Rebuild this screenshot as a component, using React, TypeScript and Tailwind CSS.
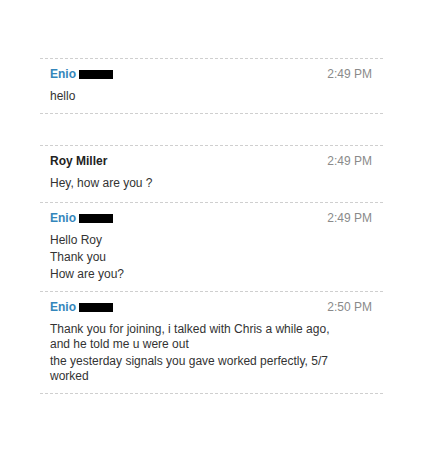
type Message = {
  id: number;
  author?: string;
  self?: boolean;
  time?: string;
  lines?: string[];
};

const messages: Message[] = [
  { id: 1, author: "Enio", self: true, time: "2:49 PM", lines: ["hello"] },
  { id: 2 },
  { id: 3, author: "Roy Miller", time: "2:49 PM", lines: ["Hey, how are you ?"] },
  {
    id: 4,
    author: "Enio",
    self: true,
    time: "2:49 PM",
    lines: ["Hello Roy", "Thank you", "How are you?"],
  },
  {
    id: 5,
    author: "Enio",
    self: true,
    time: "2:50 PM",
    lines: [
      "Thank you for joining, i talked with Chris a while ago, and he told me u were out",
      "the yesterday signals you gave worked perfectly, 5/7 worked",
    ],
  },
];

const ChatRow = ({ msg }: { msg: Message }) => {
  // ligne vide entre deux conversations
  if (!msg.author) {
    return <div className="h-[32px] border-t border-dashed border-[#cfcfcf]" />;
  }

  return (
    <div
      className={`border-t border-dashed border-[#cfcfcf] pt-2 px-[10px] ${
        msg.self ? "pb-[9px]" : "pb-[11px]"
      }`}
    >
      <div className="flex items-center justify-between h-[15px] leading-[15px]">
        <div className="flex items-center font-bold">
          <span className={msg.self ? "text-[#3486bb]" : "text-[#222]"}>{msg.author}</span>
          {msg.self && <span aria-hidden className="ml-[3px] inline-block w-[34px] h-[9px] bg-black" />}
        </div>
        <span className="text-[#8a8a8a] mr-[1px]">{msg.time}</span>
      </div>
      <div className="mt-[7px] w-[292px] text-[#333]">
        {msg.lines?.map((line, i) => (
          <p key={i} className={i > 0 ? "mt-[2px]" : ""}>
            {line}
          </p>
        ))}
      </div>
    </div>
  );
};

export default function App() {
  return (
    <div className="min-h-[456px] bg-white pt-[58px] pl-[40px] font-['Liberation_Sans',Arial,sans-serif] text-[12px] leading-[15px]">
      <div className="w-[343px] border-b border-dashed border-[#cfcfcf]">
        {messages.map((m) => (
          <ChatRow key={m.id} msg={m} />
        ))}
      </div>
    </div>
  );
}
